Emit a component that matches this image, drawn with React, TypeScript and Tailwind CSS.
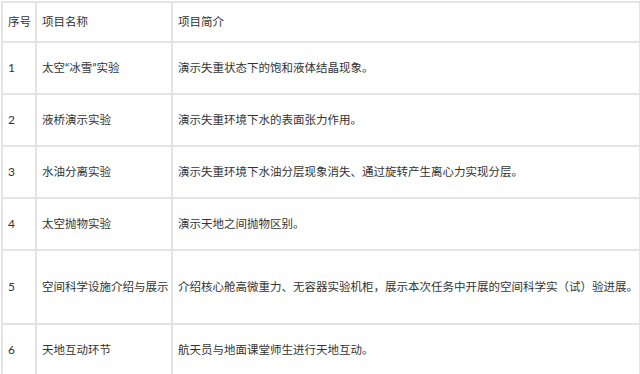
import React from 'react'

const rows = [
  { no: '1', name: '太空“冰雪”实验', desc: '演示失重状态下的饱和液体结晶现象。', h: 'h-[52px]' },
  { no: '2', name: '液桥演示实验', desc: '演示失重环境下水的表面张力作用。', h: 'h-[52px]' },
  { no: '3', name: '水油分离实验', desc: '演示失重环境下水油分层现象消失、通过旋转产生离心力实现分层。', h: 'h-[52px]' },
  { no: '4', name: '太空抛物实验', desc: '演示天地之间抛物区别。', h: 'h-[52px]' },
  { no: '5', name: '空间科学设施介绍与展示', desc: '介绍核心舱高微重力、无容器实验机柜，展示本次任务中开展的空间科学实（试）验进展。', h: 'h-[74px]' },
  { no: '6', name: '天地互动环节', desc: '航天员与地面课堂师生进行天地互动。', h: 'h-[51px]' },
]

const cell = 'border-2 border-[#e4e4e4] px-[5px] align-middle whitespace-nowrap overflow-visible'

const App: React.FC = () => {
  return (
    <div className="w-[640px] h-[374px] bg-white overflow-hidden pl-px pt-px">
      <table
        className="table-fixed w-[638px] border-collapse text-left text-[11.5px] text-[#333] leading-none"
        style={{ fontFamily: 'Lato, "Noto Sans CJK SC", sans-serif' }}
      >
        <colgroup>
          <col className="w-[34px]" />
          <col className="w-[136px]" />
          <col className="w-[468px]" />
        </colgroup>
        <thead>
          <tr className="h-[40px]">
            <th className={`${cell} font-normal`}>序号</th>
            <th className={`${cell} font-normal`}>项目名称</th>
            <th className={`${cell} font-normal`}>项目简介</th>
          </tr>
        </thead>
        <tbody>
          {rows.map((r) => (
            <tr key={r.no} className={r.h}>
              <td className={`${cell} text-[12px]`}>{r.no}</td>
              <td className={cell}>{r.name}</td>
              <td className={cell}>{r.desc}</td>
            </tr>
          ))}
        </tbody>
      </table>
    </div>
  )
}

export default App
